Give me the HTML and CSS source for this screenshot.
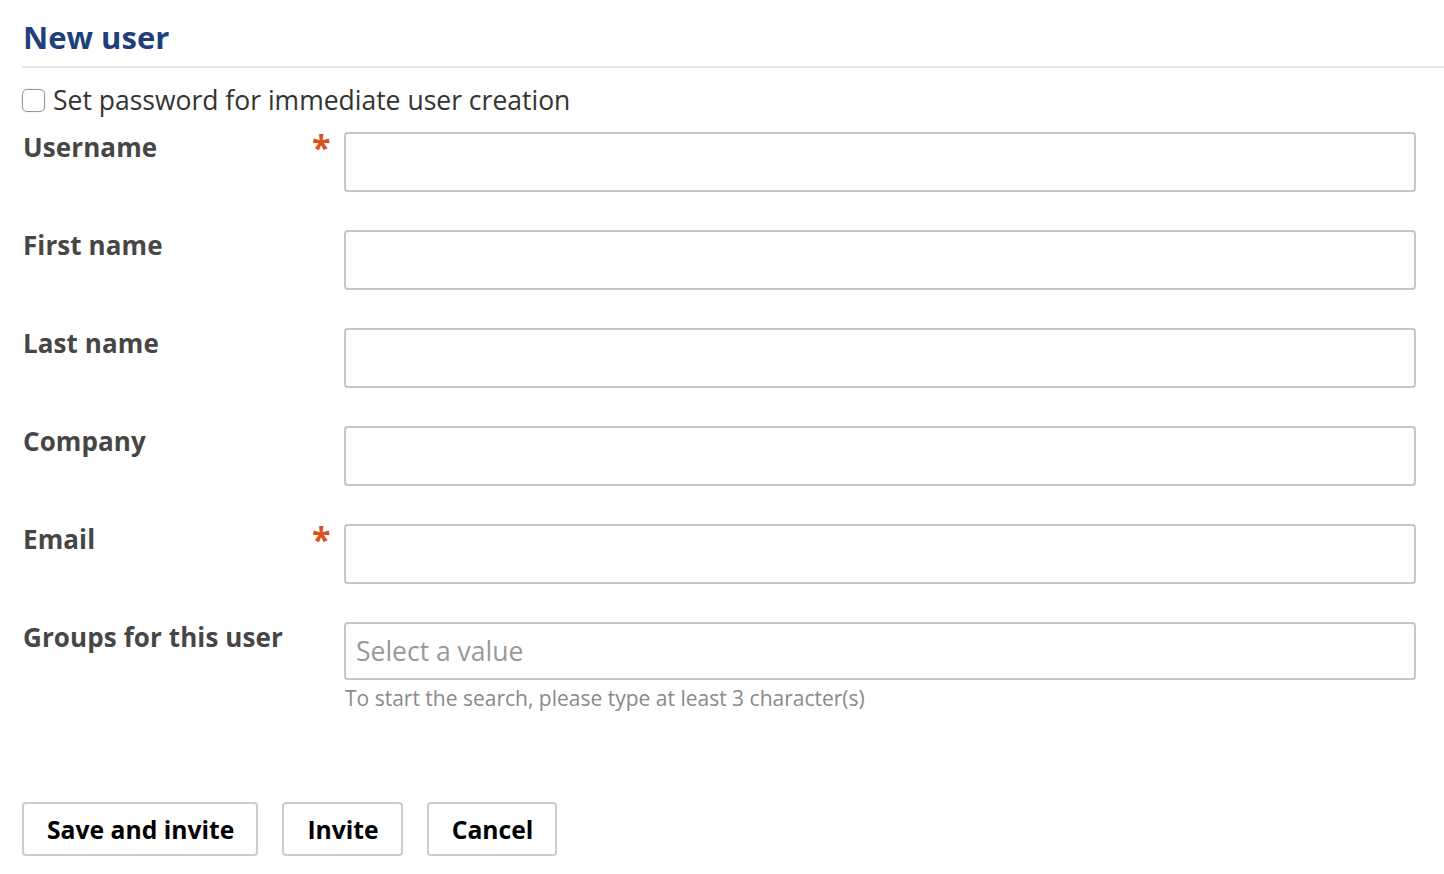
FILE: index.html
```html
<!DOCTYPE html>
<html lang="en">
<head>
<meta charset="utf-8">
<title>New user</title>
<link rel="stylesheet" href="styles.css">
</head>
<body>
<div class="page">
  <h1 class="title">New user</h1>
  <form class="form">
    <label class="check-row">
      <span class="checkbox"></span>
      <span class="check-label">Set password for immediate user creation</span>
    </label>
    <div class="field">
      <span class="label">Username</span>
      <span class="req">*</span>
      <span class="input"></span>
    </div>
    <div class="field">
      <span class="label">First name</span>
      <span class="req"></span>
      <span class="input"></span>
    </div>
    <div class="field">
      <span class="label">Last name</span>
      <span class="req"></span>
      <span class="input"></span>
    </div>
    <div class="field">
      <span class="label">Company</span>
      <span class="req"></span>
      <span class="input"></span>
    </div>
    <div class="field">
      <span class="label">Email</span>
      <span class="req">*</span>
      <span class="input"></span>
    </div>
    <div class="field field-last">
      <span class="label">Groups for this user</span>
      <span class="req"></span>
      <div class="select-wrap">
        <span class="input select"><span class="placeholder">Select a value</span></span>
        <span class="help">To start the search, please type at least 3 character(s)</span>
      </div>
    </div>
    <div class="actions">
      <button type="button" class="btn">Save and invite</button>
      <button type="button" class="btn">Invite</button>
      <button type="button" class="btn">Cancel</button>
    </div>
  </form>
</div>
</body>
</html>
```
FILE: styles.css
```css
html, body {
  margin: 0;
  padding: 0;
  background: #ffffff;
}
body {
  font-family: "Open Sans", "Lato", sans-serif;
  color: #333333;
}
.page {
  padding: 0 0 0 22px;
}
.title {
  margin: 0;
  padding: 17px 0 9px 1px;
  font-size: 31px;
  line-height: 40px;
  font-weight: 700;
  color: #1f3f7c;
  border-bottom: 2px solid #e6e6e6;
}
.form {
  padding-right: 28px;
}
.check-row {
  display: flex;
  align-items: center;
  gap: 8px;
  margin-top: 18px;
  height: 28px;
}
.checkbox {
  width: 21px;
  height: 21px;
  border: 1.5px solid #9a9a9a;
  border-radius: 5px;
  background: #fff;
  box-shadow: 0 0 2px rgba(100,140,220,0.35);
}
.check-label {
  font-size: 26.5px;
  line-height: 30px;
  color: #333;
}
.field {
  display: grid;
  grid-template-columns: 290px 32px 1fr;
  align-items: start;
  margin-top: 18px;
}
.field + .field {
  margin-top: 38px;
}
.label {
  padding-left: 1px;
  font-size: 26px;
  line-height: 30px;
  font-weight: 700;
  color: #464646;
  letter-spacing: 0.1px;
}
.req {
  font-size: 34px;
  line-height: 34px;
  font-weight: 700;
  color: #d9531e;
  margin-top: -2px;
}
.input {
  display: block;
  height: 56px;
  border: 2px solid #c6c6c6;
  border-radius: 4px;
  background: #fff;
}
.select {
  height: 54px;
  display: flex;
  align-items: center;
  padding-left: 10px;
}
.placeholder {
  font-size: 26.5px;
  color: #999999;
}
.select-wrap {
  display: flex;
  flex-direction: column;
}
.help {
  margin-top: 5px;
  font-size: 21px;
  line-height: 26px;
  color: #8a8a8a;
  padding-left: 1px;
}
.actions {
  display: flex;
  gap: 24px;
  margin-top: 91px;
}
.btn {
  height: 54px;
  padding: 0 22px 0 23px;
  font-family: "Open Sans", "Lato", sans-serif;
  font-size: 24.7px;
  font-weight: 700;
  color: #000;
  background: #fff;
  border: 2px solid #cccccc;
  border-radius: 4px;
}
```
